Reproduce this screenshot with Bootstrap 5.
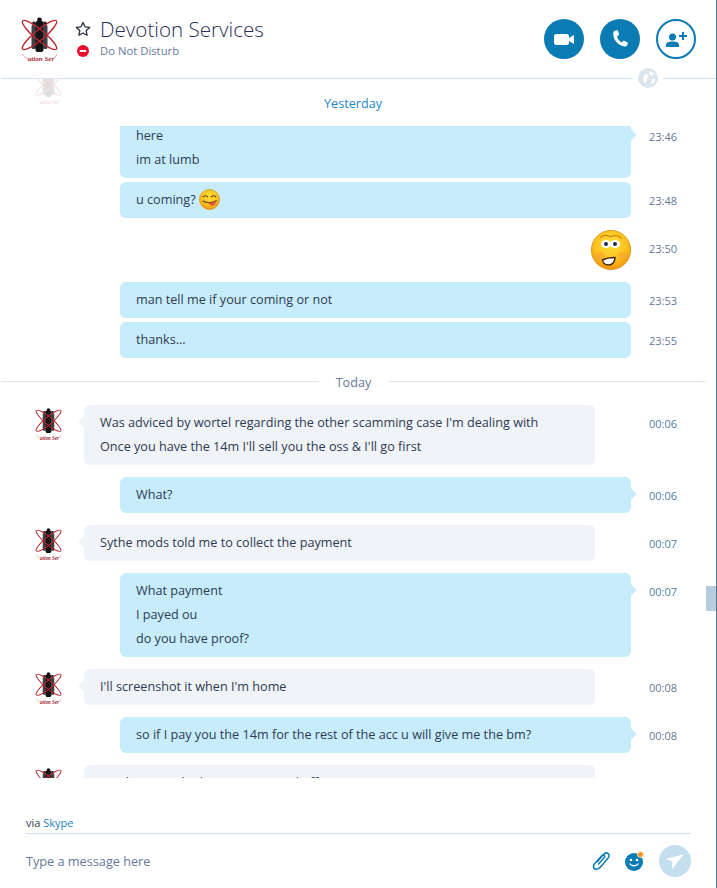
<!DOCTYPE html>
<html lang="en">

<head>
    <meta charset="utf-8">
    <meta name="viewport" content="width=device-width, initial-scale=1">
    <title>Devotion Services</title>
    <link href="https://cdn.jsdelivr.net/npm/bootstrap@5.3.3/dist/css/bootstrap.min.css" rel="stylesheet">
    <style>
        html, body {
            height: 100%;
            overflow: hidden;
        }

        body {
            font-family: "Open Sans", "Liberation Sans", sans-serif;
            font-size: 12.65px;
            color: #2f3a52;
            background: #fff;
        }

        .app-frame {
            height: 888px;
            border-right: 1px solid #4a7a9a;
        }

        .chat-head {
            height: 79px;
            padding: 0 20px 0 21px;
            z-index: 2;
        }

        .head-ava {
            margin-right: 17px;
        }

        .head-text {
            margin-bottom: 4px;
        }

        .head-rule {
            left: 1px;
            right: 0;
            bottom: 0;
            height: 1px;
            background: linear-gradient(to right, #d5e3ee 632px, transparent 632px, transparent 662px, #d5e3ee 662px);
        }

        .globe-ico {
            left: 638px;
            top: 68px;
        }

        .contact-name {
            font-size: 20.6px;
            font-weight: 300;
            line-height: 28px;
            color: #2b2f55;
        }

        .contact-status {
            font-size: 11.3px;
            line-height: 16px;
            color: #68789c;
        }

        .name-icons {
            width: 25px;
        }

        .status-dot {
            margin-left: 2px;
        }

        .round-btn {
            width: 40px;
            height: 40px;
            border-radius: 50%;
            background: #0a7bb3;
            border: 0;
            padding: 0;
        }

        .round-btn-line {
            background: #fff;
            border: 2px solid #0a7bb3;
        }

        .msg-pane {
            height: 701px;
            overflow: hidden;
        }

        .msg-track {
            padding-top: 35px;
        }

        .date-cover {
            left: 0;
            right: 10px;
            top: 0;
            height: 47px;
            background: #fff;
            color: #1f86c9;
            line-height: 48px;
        }

        .ghost-ava {
            left: 35px;
            top: -8px;
            opacity: .14;
        }

        .msg-line {
            padding-right: 86px;
            margin-top: 4px;
        }

        .msg-line.next-group {
            margin-top: 12px;
        }

        .msg-bubble {
            line-height: 24px;
            padding: 5px 16px 7px;
            border-radius: 6px;
        }

        .bubble-out {
            margin-left: 120px;
            width: 511px;
            background: #c7edfc;
        }

        .bubble-in {
            margin-left: 14px;
            width: 511px;
            background: #f0f3f8;
        }

        .tail-out::after,
        .tail-in::before {
            content: "";
            position: absolute;
            top: 13px;
            width: 8px;
            height: 8px;
            transform: rotate(45deg);
            background: inherit;
        }

        .tail-out::after {
            right: -4px;
        }

        .tail-in::before {
            left: -4px;
        }

        .msg-time {
            position: absolute;
            left: 649px;
            top: 11px;
            font-size: 11px;
            line-height: 16px;
            color: #68789c;
        }

        .msg-time.time-new {
            color: #4f7fa8;
        }

        .ava-slot {
            width: 70px;
            padding-left: 35px;
            padding-top: 2px;
        }

        .divider-line {
            margin-top: 16px;
            margin-bottom: 15px;
            padding-left: 1px;
            padding-right: 10px;
            color: #68789c;
            line-height: 16px;
        }

        .divider-line span {
            flex: 1;
            height: 1px;
            background: #dde6ee;
        }

        .divider-line b {
            font-weight: 400;
            width: 70px;
            text-align: center;
        }

        .big-smile {
            margin-left: 591px;
            margin-top: 12px;
            height: 40px;
        }

        .inline-smile {
            vertical-align: -6px;
        }

        .scroll-thumb {
            left: 706px;
            top: 586px;
            width: 10px;
            height: 25px;
            background: #b9ccdd;
        }

        .via-line {
            margin: 38px 25px 0 26px;
            padding-bottom: 3px;
            height: 18px;
            line-height: 14px;
            font-size: 11px;
            border-bottom: 1px solid #d5e3ee;
            color: #2f3a52;
        }

        .via-line a {
            color: #1f7fc0;
            text-decoration: none;
        }

        .composer {
            padding: 0 25px 0 26px;
            height: 54px;
        }

        .composer-text {
            color: #68789c;
            font-size: 12.7px;
        }

        .composer-tools {
            gap: 15px;
        }

        .send-btn {
            width: 32px;
            height: 32px;
            border-radius: 50%;
            background: #c3dfee;
        }
    </style>
</head>

<body>
    <svg width="0" height="0" class="position-absolute">
        <defs>
            <radialGradient id="faceFill" cx="50%" cy="35%" r="65%">
                <stop offset="0" stop-color="#ffe03c"/>
                <stop offset=".65" stop-color="#fcc01c"/>
                <stop offset="1" stop-color="#f09408"/>
            </radialGradient>
            <symbol id="devotion-ava" viewBox="0 0 37 47">
                <!-- group of figures -->
                <rect x="10.500" y="9" width="4.500" height="24" rx="1.500" fill="#3f3f45"/>
                <rect x="14.500" y="5" width="8" height="31" rx="2" fill="#141416"/>
                <rect x="22" y="9" width="4.500" height="24" rx="1.500" fill="#3f3f45"/>
                <circle cx="18.500" cy="4" r="2.400" fill="#111"/>
                <circle cx="13" cy="7.500" r="2" fill="#222"/>
                <circle cx="24" cy="7.500" r="2" fill="#222"/>
                <!-- crossed rings -->
                <ellipse cx="18.500" cy="19" rx="22" ry="5" transform="rotate(-40 18.500 19)" fill="none" stroke="#bb2a30" stroke-width="1.400"/>
                <ellipse cx="18.500" cy="19" rx="22" ry="5" transform="rotate(40 18.500 19)" fill="none" stroke="#bb2a30" stroke-width="1.400"/>
                <text x="20" y="45" text-anchor="middle" font-family="Liberation Serif, serif" font-style="italic" font-weight="700" font-size="7" fill="#a8242b">ation Ser</text>
                <path d="M1 38c2 3 4 4 7 5M31 43c2-1 4-2 5-5" fill="none" stroke="#c96a6e" stroke-width=".6"/>
            </symbol>
            <symbol id="tongue-smile" viewBox="0 0 22 22">
                <circle cx="11" cy="11" r="10.500" fill="url(#faceFill)" stroke="#d98c13" stroke-width=".7"/>
                <path d="M4 8.500c1.500-2 4-2 5.500 0M12.500 8.500c1.500-2 4-2 5.500 0" fill="none" stroke="#4a3310" stroke-width="1.100"/>
                <path d="M4 12.500c4 2.500 10 2.500 14.500-.5" fill="none" stroke="#4a3310" stroke-width="1.100"/>
                <path d="M10.500 14.500c2.500 0 5-1 7-2.200.4 3-1.200 5-3.500 5.200-2 .1-3.300-1.200-3.500-3z" fill="#e8504a"/>
            </symbol>
        </defs>
    </svg>

    <div class="app-frame position-relative d-flex flex-column">
        <!-- header -->
        <div class="chat-head position-relative d-flex align-items-center">
            <svg class="head-ava flex-shrink-0" width="37" height="47">
                <use href="#devotion-ava"/>
            </svg>
            <div class="head-text flex-grow-1">
                <div class="d-flex align-items-center">
                    <div class="name-icons">
                        <svg width="16" height="16" viewBox="0 0 16 16" class="d-block">
                            <path d="M8 1.500l2 4.300 4.700.6-3.500 3.200.9 4.700L8 12l-4.100 2.300.9-4.700L1.300 6.400 6 5.800z" fill="none" stroke="#2b2f40" stroke-width="1.300" stroke-linejoin="round"/>
                        </svg>
                    </div>
                    <div class="contact-name">Devotion Services</div>
                </div>
                <div class="d-flex align-items-center">
                    <div class="name-icons">
                        <svg width="12" height="12" viewBox="0 0 13 13" class="status-dot d-block">
                            <circle cx="6.500" cy="6.500" r="6.500" fill="#e8112d"/>
                            <rect x="3" y="5.300" width="7" height="2.400" rx=".6" fill="#fff"/>
                        </svg>
                    </div>
                    <div class="contact-status">Do Not Disturb</div>
                </div>
            </div>
            <div class="d-flex gap-3">
                <button class="round-btn d-flex align-items-center justify-content-center" type="button" aria-label="Video call">
                    <svg width="20" height="11" viewBox="0 0 20 11">
                        <rect x="0" y="0" width="15" height="11" rx="2.500" fill="#fff"/>
                        <path d="M15 4 20 1v9l-5-3z" fill="#fff"/>
                    </svg>
                </button>
                <button class="round-btn d-flex align-items-center justify-content-center" type="button" aria-label="Call">
                    <svg width="18" height="18" viewBox="0 0 18 18">
                        <path d="M3.800.8 6 .2c.5-.1.800.1 1 .6l1 3.400c.1.500 0 .8-.4 1L6 6.200c.4 2.400 2.200 5 4.600 6.200l1.400-1.400c.3-.3.700-.4 1.100-.2l3.200 1.500c.5.200.6.600.5 1.100l-.8 2.100c-.2.600-.7 1-1.400 1C8 16.600 1.600 10 2.300 3c.1-1.200.6-1.900 1.500-2.200z" fill="#fff"/>
                    </svg>
                </button>
                <button class="round-btn round-btn-line d-flex align-items-center justify-content-center" type="button" aria-label="Add people">
                    <svg width="21" height="15" viewBox="0 0 21 15">
                        <circle cx="6.500" cy="5" r="3.500" fill="#0a7bb3"/>
                        <path d="M0 15v-2c0-2.500 2.500-3.500 6.500-3.500S13 10.500 13 13v2z" fill="#0a7bb3"/>
                        <path d="M17 0v8M13 4h8" stroke="#0a7bb3" stroke-width="2"/>
                    </svg>
                </button>
            </div>
            <div class="head-rule position-absolute"></div>
            <svg class="globe-ico position-absolute" width="20" height="20" viewBox="0 0 22 22">
                <circle cx="11" cy="11" r="11" fill="#dbe6ef"/>
                <path d="M7 8c2-2 5-1 5 1s-2 1-2 3-1 3-2 4-2-1-2-3-1-3 1-5zM13 3l5 3-3 3-3-3zM15 12h4c0 3-2 5-4 6z" fill="#fff"/>
            </svg>
        </div>

        <!-- messages -->
        <div class="msg-pane position-relative">
            <div class="msg-track">
                <div class="msg-line position-relative">
                    <div class="msg-bubble bubble-out tail-out position-relative">here<br>im at lumb</div>
                    <div class="msg-time">23:46</div>
                </div>
                <div class="msg-line position-relative">
                    <div class="msg-bubble bubble-out position-relative">u coming?
                        <svg class="inline-smile" width="21" height="21"><use href="#tongue-smile"/></svg>
                    </div>
                    <div class="msg-time">23:48</div>
                </div>
                <div class="msg-line position-relative">
                    <div class="big-smile">
                        <svg width="41" height="40" viewBox="0 0 41 40">
                            <circle cx="20" cy="20" r="19.600" fill="url(#faceFill)" stroke="#d98c13" stroke-width=".8"/>
                            <ellipse cx="9" cy="26" rx="5" ry="4" fill="#f59a3a" opacity=".5"/>
                            <ellipse cx="32" cy="26" rx="5" ry="4" fill="#f59a3a" opacity=".5"/>
                            <path d="M9 8c3-4 7-3 11-1 3-2 8-2 11 2" fill="none" stroke="#c98a14" stroke-width="1.200"/>
                            <ellipse cx="15" cy="14" rx="5" ry="4" fill="#fff"/>
                            <ellipse cx="24" cy="14" rx="5" ry="4" fill="#fff"/>
                            <circle cx="15" cy="14" r="2" fill="#1d2a55"/>
                            <circle cx="24" cy="14" r="2" fill="#1d2a55"/>
                            <path d="M11.500 30c4-2 8-2.500 12.500-2.500 0 4-2.500 7.500-6.500 7.500-3 0-5.500-2-6-5z" fill="#fff" stroke="#4a2a10" stroke-width="1.500"/>
                        </svg>
                    </div>
                    <div class="msg-time">23:50</div>
                </div>
                <div class="msg-line next-group position-relative">
                    <div class="msg-bubble bubble-out position-relative">man tell me if your coming or not</div>
                    <div class="msg-time">23:53</div>
                </div>
                <div class="msg-line position-relative">
                    <div class="msg-bubble bubble-out position-relative">thanks...</div>
                    <div class="msg-time">23:55</div>
                </div>

                <div class="divider-line d-flex align-items-center">
                    <span></span><b>Today</b><span></span>
                </div>

                <div class="msg-line d-flex position-relative">
                    <div class="ava-slot"><svg width="27" height="34" class="d-block"><use href="#devotion-ava"/></svg></div>
                    <div class="msg-bubble bubble-in tail-in position-relative">Was adviced by wortel regarding the other scamming case I'm dealing with<br>Once you have the 14m I'll sell you the oss &amp; I'll go first</div>
                    <div class="msg-time time-new">00:06</div>
                </div>
                <div class="msg-line next-group position-relative">
                    <div class="msg-bubble bubble-out tail-out position-relative">What?</div>
                    <div class="msg-time time-new">00:06</div>
                </div>
                <div class="msg-line next-group d-flex position-relative">
                    <div class="ava-slot"><svg width="27" height="34" class="d-block"><use href="#devotion-ava"/></svg></div>
                    <div class="msg-bubble bubble-in tail-in position-relative">Sythe mods told me to collect the payment</div>
                    <div class="msg-time time-new">00:07</div>
                </div>
                <div class="msg-line next-group position-relative">
                    <div class="msg-bubble bubble-out tail-out position-relative">What payment<br>I payed ou<br>do you have proof?</div>
                    <div class="msg-time time-new">00:07</div>
                </div>
                <div class="msg-line next-group d-flex position-relative">
                    <div class="ava-slot"><svg width="27" height="34" class="d-block"><use href="#devotion-ava"/></svg></div>
                    <div class="msg-bubble bubble-in tail-in position-relative">I'll screenshot it when I'm home</div>
                    <div class="msg-time">00:08</div>
                </div>
                <div class="msg-line next-group position-relative">
                    <div class="msg-bubble bubble-out tail-out position-relative">so if I pay you the 14m for the rest of the acc u will give me the bm?</div>
                    <div class="msg-time">00:08</div>
                </div>
                <div class="msg-line next-group d-flex position-relative">
                    <div class="ava-slot"><svg width="27" height="34" class="d-block"><use href="#devotion-ava"/></svg></div>
                    <div class="msg-bubble bubble-in tail-in position-relative">You know aside the payment paid off</div>
                </div>
            </div>

            <div class="date-cover position-absolute text-center">Yesterday</div>
            <svg class="ghost-ava position-absolute" width="27" height="34"><use href="#devotion-ava"/></svg>
        </div>

        <!-- composer -->
        <div class="via-line">via <a href="#">Skype</a></div>
        <div class="composer d-flex align-items-center">
            <div class="composer-text flex-grow-1">Type a message here</div>
            <div class="composer-tools d-flex align-items-center">
                <svg width="18" height="20" viewBox="0 0 18 20">
                    <path d="M5.500 10.500 11.500 3.500c1.500-1.700 3.500-1.800 4.700-.8s1.200 3-.2 4.600L8.500 16c-2 2.300-4.700 2.800-6 1.600S1 14.500 3 12.300L9.500 5c.9-1 2-1.200 2.700-.6s.6 1.700-.2 2.600L6.500 13" fill="none" stroke="#0a7bb3" stroke-width="1.500" stroke-linecap="round"/>
                </svg>
                <svg width="19" height="20" viewBox="0 0 19 20">
                    <circle cx="9" cy="11" r="9" fill="#0a7bb3"/>
                    <circle cx="6" cy="9" r="1.300" fill="#fff"/>
                    <circle cx="12" cy="9" r="1.300" fill="#fff"/>
                    <path d="M4.500 12.500c2 3 7 3 9 0" fill="none" stroke="#fff" stroke-width="1.300"/>
                    <circle cx="15.500" cy="3.500" r="3" fill="#f7941d" stroke="#fff" stroke-width=".8"/>
                </svg>
                <div class="send-btn d-flex align-items-center justify-content-center">
                    <svg width="18" height="15" viewBox="0 0 18 15">
                        <path d="M0 5 18 0 6 15 6.500 7.500z" fill="#fff"/>
                    </svg>
                </div>
            </div>
        </div>

        <div class="scroll-thumb position-absolute"></div>
    </div>

    <script src="https://cdn.jsdelivr.net/npm/bootstrap@5.3.3/dist/js/bootstrap.bundle.min.js"></script>
</body>

</html>
